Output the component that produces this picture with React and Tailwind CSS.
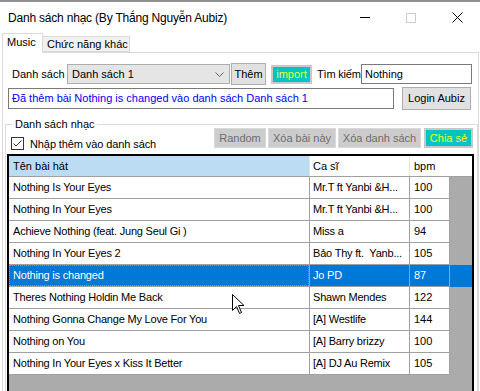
import React from "react";

const songs = [
  { name: "Nothing Is Your Eyes", artist: "Mr.T ft Yanbi &H...", bpm: "100" },
  { name: "Nothing In Your Eyes", artist: "Mr.T ft Yanbi &H...", bpm: "100" },
  { name: "Achieve Nothing (feat. Jung Seul Gi )", artist: "Miss a", bpm: "94" },
  { name: "Nothing In Your Eyes 2", artist: "Bảo Thy ft.  Yanb...", bpm: "105" },
  { name: "Nothing is changed", artist: "Jo PD", bpm: "87", selected: true },
  { name: "Theres Nothing Holdin Me Back", artist: "Shawn Mendes", bpm: "122" },
  { name: "Nothing Gonna Change My Love For You", artist: "[A] Westlife", bpm: "144" },
  { name: "Nothing on You", artist: "[A] Barry brizzy", bpm: "100" },
  { name: "Nothing In Your Eyes x Kiss It Better", artist: "[A] DJ Au Remix", bpm: "105" },
];

function TitleBar() {
  return (
    <div className="flex h-[31px] items-center">
      <div className="pl-[8px] text-[12px] tracking-[-0.2px]">Danh sách nhạc (By Thắng Nguyễn Aubiz)</div>
      <div className="ml-auto flex h-full">
        <div className="flex w-[46px] items-center justify-center">
          <div className="h-px w-[10px] bg-black" />
        </div>
        <div className="flex w-[46px] items-center justify-center">
          <div className="h-[10px] w-[10px] border border-[#cccccc]" />
        </div>
        <div className="flex w-[46px] items-center justify-center">
          <svg width="11" height="11" viewBox="0 0 11 11">
            <path d="M0.5 0.5 L10.5 10.5 M10.5 0.5 L0.5 10.5" stroke="#000" strokeWidth="1" />
          </svg>
        </div>
      </div>
    </div>
  );
}

function Tabs() {
  return (
    <div className="flex h-[19px] items-end pl-[2px]">
      <div className="relative z-10 -mb-px flex h-[20px] w-[41px] items-center border border-b-0 border-[#d9d9d9] bg-white pl-[4px] pb-[2px] text-[11px]">
        Music
      </div>
      <div className="flex h-[16px] w-[87px] items-center border border-l-0 border-[#d9d9d9] bg-[#f0f0f0] pl-[4px] text-[11px]">
        Chức năng khác
      </div>
    </div>
  );
}

function Grid() {
  return (
    <div className="ml-[1px] mt-[4px] h-[240px] w-[467px] border-2 border-black bg-[#ababab]">
      <div className="flex h-[21px] border-b border-[#a0a0a0] bg-white">
        <div className="flex w-[301px] items-center border-r border-[#e5e5e5] bg-[#bcdcf4] pl-[4px]">Tên bài hát</div>
        <div className="flex w-[100px] items-center border-r border-[#e5e5e5] pl-[3px]">Ca sĩ</div>
        <div className="flex w-[40px] items-center pl-[4px]">bpm</div>
      </div>
      {songs.map((s, i) => (
        <div
          key={i}
          className={
            s.selected
              ? "flex h-[22px] bg-[#0078d7] text-white"
              : "flex h-[22px] text-black"
          }
        >
          <div className="flex w-[301px] border-b border-r border-[#a0a0a0]">
            <div
              className={
                s.selected
                  ? "flex flex-1 items-center border border-dotted border-[#e08a1e] pl-[3px] tracking-[-0.2px] whitespace-pre"
                  : "flex flex-1 items-center pl-[4px] tracking-[-0.2px] whitespace-pre bg-white"
              }
            >
              {s.name}
            </div>
          </div>
          <div
            className={
              s.selected
                ? "flex w-[100px] items-center border-b border-r border-[#a0a0a0] pl-[3px] tracking-[-0.2px] whitespace-pre"
                : "flex w-[100px] items-center border-b border-r border-[#a0a0a0] bg-white pl-[3px] tracking-[-0.2px] whitespace-pre"
            }
          >
            {s.artist}
          </div>
          <div
            className={
              s.selected
                ? "flex w-[40px] items-center border-b border-r border-[#a0a0a0] pl-[4px]"
                : "flex w-[40px] items-center border-b border-r border-[#a0a0a0] bg-white pl-[4px]"
            }
          >
            {s.bpm}
          </div>
        </div>
      ))}
    </div>
  );
}

export default function App() {
  return (
    <div className="relative h-[391px] w-[480px] overflow-hidden border-t-2 border-[#8f8f8f] bg-white text-[11px] text-black font-['Liberation_Sans',Arial,sans-serif]">
      <TitleBar />
      <Tabs />
      <div className="ml-[2px] h-[400px] w-[477px] border border-[#d9d9d9] bg-white">
        {/* row 1 */}
        <div className="mt-[10px] flex h-[22px] items-center">
          <div className="ml-[9px] w-[55px] whitespace-nowrap">Danh sách</div>
          <div className="flex h-[20px] w-[163px] items-center border border-[#adadad] bg-[#e5e5e5] pl-[4px]">
            <span>Danh sách 1</span>
            <svg className="ml-auto mr-[5px]" width="9" height="5" viewBox="0 0 9 5">
              <path d="M0.5 0.5 L4.5 4.5 L8.5 0.5" stroke="#606060" fill="none" />
            </svg>
          </div>
          <div className="ml-[1px] flex h-[22px] w-[35px] items-center justify-center border border-[#adadad] bg-[#e1e1e1]">
            Thêm
          </div>
          <div className="ml-[5px] flex h-[19px] w-[41px] items-center justify-center border-2 border-[#c8c8c8] bg-[#00c4c4] text-[#e8ff3a]">
            import
          </div>
          <div className="ml-[5px] w-[44px] whitespace-nowrap tracking-[-0.2px]">Tìm kiếm</div>
          <div className="flex h-[20px] w-[111px] items-center border border-[#7a7a7a] pl-[3px]">Nothing</div>
        </div>
        {/* row 2 */}
        <div className="mt-[2px] flex h-[23px] items-center">
          <div className="ml-[5px] flex h-[21px] w-[386px] items-center border border-[#7a7a7a] pl-[3px] text-[#0000ff]">
            Đã thêm bài Nothing is changed vào danh sách Danh sách 1
          </div>
          <div className="ml-[8px] flex h-[23px] w-[69px] items-center justify-center border border-[#adadad] bg-[#e1e1e1]">
            Login Aubiz
          </div>
        </div>
        {/* group box */}
        <fieldset className="ml-[2px] mt-[6px] w-[473px] border border-[#dcdcdc] pb-[40px]">
          <legend className="ml-[7px] h-[16px] px-[2px] leading-[16px]">Danh sách nhạc</legend>
          <div className="-mt-[4px] flex h-[22px]">
            <div className="ml-[5px] mt-[9px] flex h-[13px] w-[13px] items-center justify-center border border-[#333333] bg-white">
              <svg width="9" height="7" viewBox="0 0 9 7">
                <path d="M0.5 3.5 L3 6 L8.5 0.5" stroke="#333" fill="none" strokeWidth="1" />
              </svg>
            </div>
            <div className="ml-[6px] mt-[8px] tracking-[-0.1px]">Nhập thêm vào danh sách</div>
            <div className="ml-auto mr-[4px] flex h-[20px] gap-[2px] text-[#6d6d6d]">
              <div className="flex w-[52px] items-center justify-center border border-[#d9d9d9] bg-[#cccccc]">Random</div>
              <div className="flex w-[68px] items-center justify-center border border-[#d9d9d9] bg-[#cccccc]">Xóa bài này</div>
              <div className="flex w-[83px] items-center justify-center border border-[#d9d9d9] bg-[#cccccc]">Xóa danh sách</div>
              <div className="ml-[1px] flex w-[49px] items-center justify-center border-2 border-[#c8c8c8] bg-[#00c4c4] text-[#f0ff30]">
                Chia sẻ
              </div>
            </div>
          </div>
          <Grid />
        </fieldset>
      </div>
      {/* mouse cursor */}
      <svg className="absolute left-[232px] top-[292px]" width="13" height="21" viewBox="0 0 13 21">
        <path
          d="M0.5 0.5 L0.5 16.5 L4.5 12.5 L7.5 19.5 L9.5 18.5 L6.5 11.5 L12 11.5 Z"
          fill="#fff"
          stroke="#000"
          strokeWidth="1"
        />
      </svg>
    </div>
  );
}
